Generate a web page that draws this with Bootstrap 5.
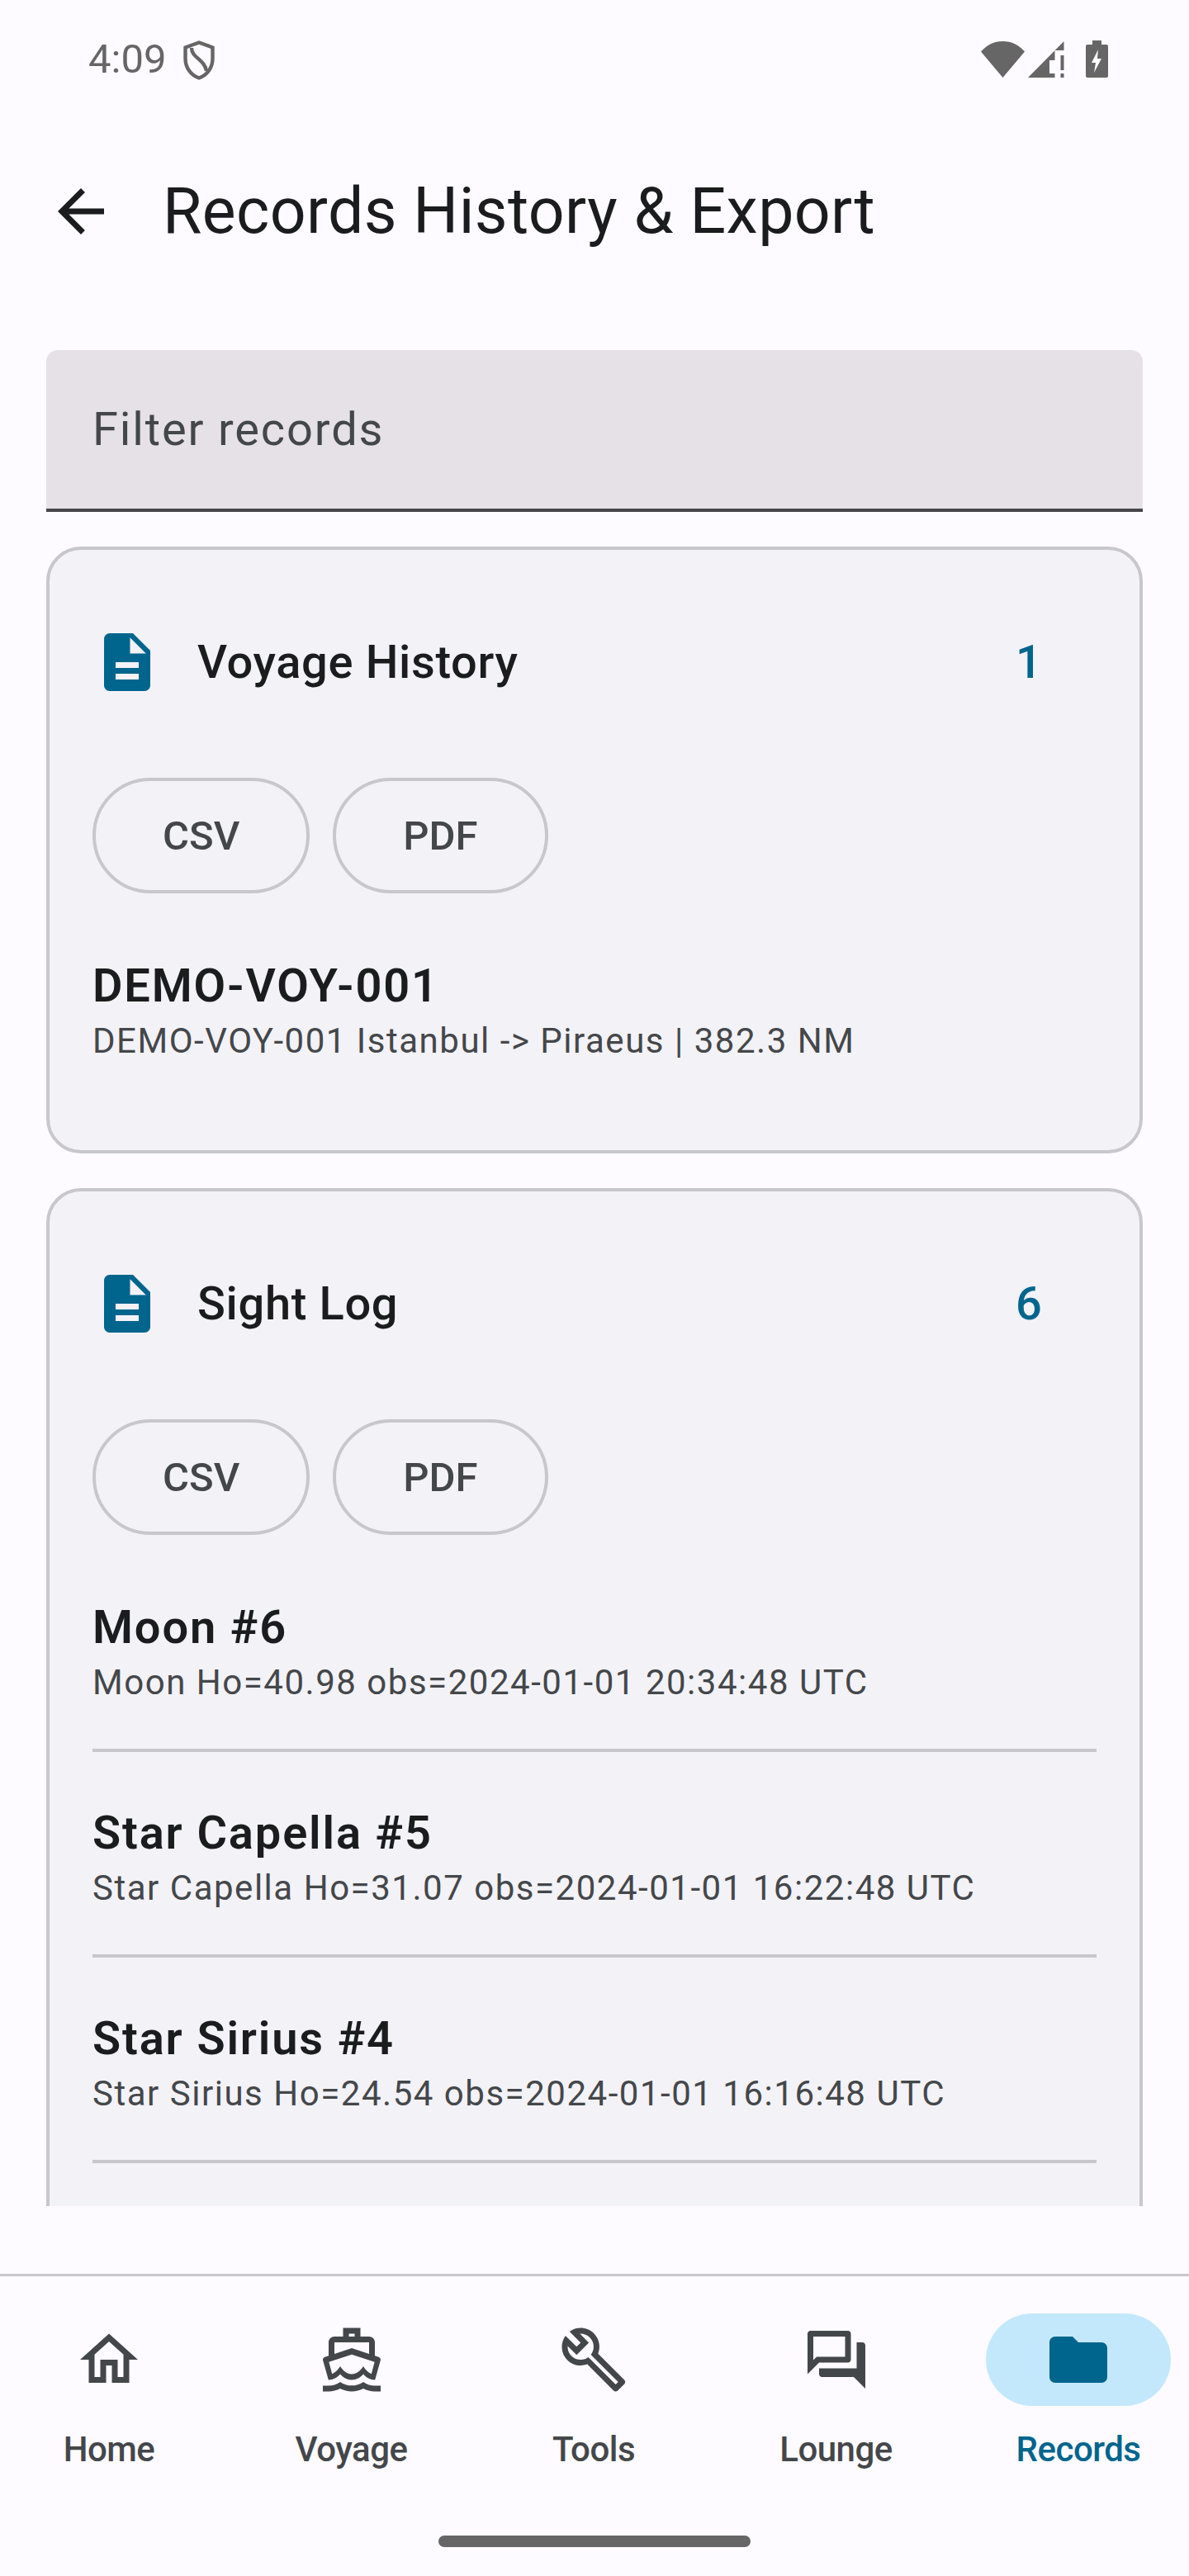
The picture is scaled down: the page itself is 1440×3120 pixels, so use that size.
<!DOCTYPE html>
<html lang="en">
<head>
  <meta charset="UTF-8" />
  <meta name="viewport" content="width=device-width, initial-scale=1.0"/>
  <title>Records History &amp; Export</title>
  <link rel="stylesheet" href="https://cdn.jsdelivr.net/npm/bootstrap@5.3.0/dist/css/bootstrap.min.css" />
  <style>
    body {
      background: #fdfbff;
      font-family: Roboto, "Liberation Sans", sans-serif;
      color: #1a1c1e;
      width: 1440px;
      height: 3120px;
      overflow: hidden;
    }
    .status-row { height: 146px; padding: 0 98px 3px 107px; color: #666; }
    .clock-text { font-size: 49px; line-height: 1; margin-right: 21px; }
    .shield-icon { margin-top: 3px; }
    .batt-icon { margin-left: 26px; }
    .title-row { height: 220px; padding: 0 56px; }
    .page-title { font-size: 77px; font-weight: 400; line-height: 112px; letter-spacing: .4px; margin: 0 0 0 57px; }
    .records-area { height: 2306px; padding: 0 56px; overflow: hidden; }
    .records-inner { padding-top: 58px; }
    .filter-input.form-control {
      height: 196px;
      background: #e5e1e6;
      border: 0;
      border-bottom: 4px solid #46464b;
      border-radius: 14px 14px 0 0;
      font-size: 56px;
      letter-spacing: 1.85px;
      padding: 0 56px;
      color: #44474a;
      box-shadow: none;
    }
    .filter-input.form-control::placeholder { color: #44474a; opacity: 1; }
    .record-card.card {
      background: #f3f2f7;
      border: 4px solid #c8c7cc;
      border-radius: 42px;
      margin-top: 42px;
    }
    .record-card .card-body { padding: 94px 52px 52px 52px; }
    .card-head { height: 84px; margin-bottom: 98px; }
    .card-head svg { width: 84px; height: 84px; fill: #00658d; margin-right: 43px; flex: none; }
    .card-name { font-size: 56px; font-weight: 500; letter-spacing: .65px; line-height: 84px; }
    .card-count { font-size: 56px; font-weight: 500; color: #00658d; line-height: 84px; width: 98px; }
    .export-row { gap: 28px; }
    .export-btn.btn {
      height: 140px;
      padding: 0 81px;
      font-size: 49px;
      font-weight: 500;
      line-height: 1;
      color: #44474a;
      background: transparent;
      border: 4px solid #c8c7cc;
    }
    .record-list { margin-top: 14px; }
    .record-list .list-group-item {
      background: transparent;
      border: 0;
      border-bottom: 4px solid #c8c7cc;
      padding: 63px 0 48px 0;
      border-radius: 0;
    }
    .record-list .list-group-item:last-child { border-bottom: 0; }
    .more-rows { height: 249px; }
    .item-name { font-size: 56px; font-weight: 600; letter-spacing: 1.85px; line-height: 70px; color: #1a1c1e; }
    .item-sub { font-size: 42px; letter-spacing: 1.52px; line-height: 64px; color: #44474a; }
    .bottom-nav {
      position: fixed;
      left: 0; right: 0; bottom: 0;
      height: 366px;
      background: #fdfbff;
      border-top: 3px solid #c8c7cc;
      padding: 45px 22px 0 20px;
    }
    .nav-cell { width: 224px; text-decoration: none; color: #44474a; font-size: 42px; font-weight: 500; letter-spacing: -.5px; }
    .nav-pill { width: 224px; height: 112px; border-radius: 56px; margin-bottom: 23px; }
    .nav-pill svg { width: 84px; height: 84px; fill: #44474a; }
    .nav-cell.active { color: #00658d; }
    .nav-cell.active .nav-pill { background: #c4e8fb; }
    .nav-cell.active .nav-pill svg { fill: #00658d; }
    .nav-label { line-height: 60px; }
    .home-bar { position: absolute; left: 531px; top: 314px; width: 378px; height: 14px; border-radius: 7px; background: #666; }
  </style>
</head>
<body>
  <!-- STATUS BAR -->
  <div class="status-row d-flex align-items-center justify-content-between">
    <div class="d-flex align-items-center">
      <span class="clock-text">4:09</span>
      <svg class="shield-icon" width="38" height="48" viewBox="0 0 38 48" fill="none" stroke="#666" stroke-width="4.4"><path d="M19 2.500 35.500 8.500V22C35.500 33 29 42 19 45.500 9 42 2.500 33 2.500 22V8.500Z"/><path d="M10 9C10 21 26 23 28 37"/></svg>
    </div>
    <div class="d-flex align-items-center">
      <svg width="53" height="44" viewBox="0 0 53 44" fill="#666"><path d="M0 12.500C7 4.500 16 0 26.500 0S46 4.500 53 12.500L26.500 44Z"/></svg>
      <svg class="ms-1" width="44" height="44" viewBox="0 0 44 44" fill="#666"><path d="M0 44 43.500 0V11H32.500V23H26V39H32.500V44Z"/><path d="M39.500 17H43.500V35H39.500ZM39.500 39H43.500V44H39.500Z"/></svg>
      <svg class="batt-icon" width="27" height="45" viewBox="0 0 27 45"><path fill="#666" d="M8 0H19V5H25C26.100 5 27 5.900 27 7V43C27 44.100 26.100 45 25 45H2C.9 45 0 44.100 0 43V7C0 5.900.9 5 2 5H8Z"/><path fill="#fdfbff" d="M15 11 7 27H12L10 39 19 22H14Z"/></svg>
    </div>
  </div>

  <!-- APP BAR -->
  <div class="title-row d-flex align-items-center">
    <svg width="84" height="84" viewBox="0 0 24 24" fill="#1a1c1e"><path d="M20 11H7.830l5.590-5.590L12 4l-8 8 8 8 1.410-1.410L7.830 13H20v-2z"/></svg>
    <h1 class="page-title">Records History &amp; Export</h1>
  </div>

  <div class="records-area">
    <div class="records-inner">
      <input type="text" class="form-control filter-input" placeholder="Filter records" />

      <!-- VOYAGE HISTORY -->
      <div class="card record-card">
        <div class="card-body">
          <div class="card-head d-flex align-items-center">
            <svg viewBox="0 0 24 24"><path d="M14 2H6c-1.100 0-1.990.9-1.990 2L4 20c0 1.100.89 2 1.990 2H18c1.100 0 2-.9 2-2V8l-6-6zm2 16H8v-2h8v2zm0-4H8v-2h8v2zm-3-5V3.500L18.500 9H13z"/></svg>
            <span class="card-name flex-grow-1">Voyage History</span>
            <span class="card-count">1</span>
          </div>
          <div class="d-flex export-row">
            <button type="button" class="btn export-btn rounded-pill">CSV</button>
            <button type="button" class="btn export-btn rounded-pill">PDF</button>
          </div>
          <div class="list-group record-list">
            <div class="list-group-item">
              <div class="item-name">DEMO-VOY-001</div>
              <div class="item-sub">DEMO-VOY-001 Istanbul -&gt; Piraeus | 382.3 NM</div>
            </div>
          </div>
        </div>
      </div>

      <!-- SIGHT LOG -->
      <div class="card record-card">
        <div class="card-body">
          <div class="card-head d-flex align-items-center">
            <svg viewBox="0 0 24 24"><path d="M14 2H6c-1.100 0-1.990.9-1.990 2L4 20c0 1.100.89 2 1.990 2H18c1.100 0 2-.9 2-2V8l-6-6zm2 16H8v-2h8v2zm0-4H8v-2h8v2zm-3-5V3.500L18.500 9H13z"/></svg>
            <span class="card-name flex-grow-1">Sight Log</span>
            <span class="card-count">6</span>
          </div>
          <div class="d-flex export-row">
            <button type="button" class="btn export-btn rounded-pill">CSV</button>
            <button type="button" class="btn export-btn rounded-pill">PDF</button>
          </div>
          <div class="list-group record-list">
            <div class="list-group-item">
              <div class="item-name">Moon #6</div>
              <div class="item-sub">Moon Ho=40.98 obs=2024-01-01 20:34:48 UTC</div>
            </div>
            <div class="list-group-item">
              <div class="item-name">Star Capella #5</div>
              <div class="item-sub">Star Capella Ho=31.07 obs=2024-01-01 16:22:48 UTC</div>
            </div>
            <div class="list-group-item">
              <div class="item-name">Star Sirius #4</div>
              <div class="item-sub">Star Sirius Ho=24.54 obs=2024-01-01 16:16:48 UTC</div>
            </div>
            <!-- list keeps going under the nav, cut off by the scroll area -->
            <div class="list-group-item more-rows"></div>
          </div>
        </div>
      </div>
    </div>
  </div>

  <!-- BOTTOM NAV -->
  <nav class="bottom-nav d-flex justify-content-between align-items-start">
    <a class="nav-cell d-flex flex-column align-items-center" href="#">
      <span class="nav-pill d-flex align-items-center justify-content-center">
        <svg viewBox="0 0 24 24"><path d="M12 5.690l5 4.500V18h-2v-6H9v6H7v-7.810l5-4.500M12 3L2 12h3v8h6v-6h2v6h6v-8h3L12 3z"/></svg>
      </span>
      <span class="nav-label">Home</span>
    </a>
    <a class="nav-cell d-flex flex-column align-items-center" href="#">
      <span class="nav-pill d-flex align-items-center justify-content-center">
        <svg viewBox="0 0 24 24" fill-rule="evenodd"><path d="M20 21c-1.390 0-2.780-.47-4-1.320-2.440 1.710-5.560 1.710-8 0C6.780 20.530 5.390 21 4 21H2v2h2c1.380 0 2.740-.35 4-.99 2.520 1.290 5.480 1.290 8 0 1.260.65 2.620.99 4 .99h2v-2h-2zM3.950 19H4c1.600 0 3.020-.88 4-2 .98 1.120 2.400 2 4 2s3.020-.88 4-2c.98 1.120 2.400 2 4 2h.05l1.890-6.680c.08-.26.06-.54-.06-.78s-.34-.42-.6-.5L20 10.620V6c0-1.100-.9-2-2-2h-3V1H9v3H6c-1.100 0-2 .9-2 2v4.620l-1.290.42c-.26.08-.48.26-.6.5s-.15.52-.06.78L3.950 19zM6 6h12v3.970L12 8 6 9.970V6zM11 3h2v1h-2zM12 10.200 4.100 12.800 5.200 16.900C6.200 16.500 7.200 15.600 8 14.300 9 15.900 10.400 17 12 17s3-1.100 4-2.700C16.800 15.600 17.800 16.500 18.800 16.900L19.900 12.800Z"/></svg>
      </span>
      <span class="nav-label">Voyage</span>
    </a>
    <a class="nav-cell d-flex flex-column align-items-center" href="#">
      <span class="nav-pill d-flex align-items-center justify-content-center">
        <svg viewBox="0 0 24 24"><path d="M22.610 18.990l-9.080-9.080c.93-2.340.45-5.100-1.440-7C9.790.61 6.210.4 3.660 2.260L7.500 6.110 6.080 7.520 2.250 3.690C.39 6.230.6 9.820 2.900 12.110c1.860 1.860 4.570 2.350 6.890 1.480l9.110 9.110c.39.39 1.020.39 1.410 0l2.300-2.300c.4-.38.4-1.010 0-1.410zm-3 1.600l-9.460-9.460c-.61.45-1.290.72-2 .82-1.360.2-2.790-.21-3.830-1.250C3.370 9.760 2.930 8.500 3 7.260l3.090 3.090 4.240-4.240-3.090-3.090c1.240-.07 2.490.37 3.440 1.310 1.080 1.080 1.490 2.570 1.240 3.960-.12.71-.42 1.370-.88 1.960l9.450 9.450-.88.88z"/></svg>
      </span>
      <span class="nav-label">Tools</span>
    </a>
    <a class="nav-cell d-flex flex-column align-items-center" href="#">
      <span class="nav-pill d-flex align-items-center justify-content-center">
        <svg viewBox="0 0 24 24"><path d="M15 4v7H5.170L4 12.170V4h11m1-2H3c-.55 0-1 .45-1 1v14l4-4h10c.55 0 1-.45 1-1V3c0-.55-.45-1-1-1zm5 4h-2v9H6v2c0 .55.45 1 1 1h11l4 4V7c0-.55-.45-1-1-1z"/></svg>
      </span>
      <span class="nav-label">Lounge</span>
    </a>
    <a class="nav-cell active d-flex flex-column align-items-center" href="#">
      <span class="nav-pill d-flex align-items-center justify-content-center">
        <svg viewBox="0 0 24 24"><path d="M10 4H4c-1.100 0-1.990.9-1.990 2L2 18c0 1.100.9 2 2 2h16c1.100 0 2-.9 2-2V8c0-1.100-.9-2-2-2h-8l-2-2z"/></svg>
      </span>
      <span class="nav-label">Records</span>
    </a>
    <div class="home-bar"></div>
  </nav>

  <script src="https://cdn.jsdelivr.net/npm/bootstrap@5.3.0/dist/js/bootstrap.bundle.min.js"></script>
</body>
</html>
